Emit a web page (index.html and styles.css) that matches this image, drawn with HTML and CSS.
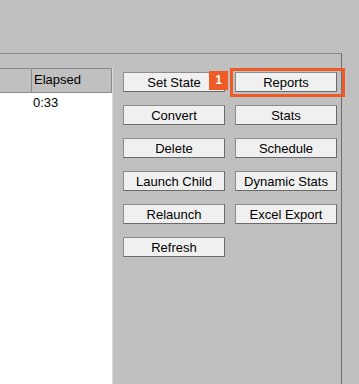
FILE: index.html
```html
<!DOCTYPE html>
<html lang="en">
<head>
  <meta charset="UTF-8" />
  <title>Job Actions</title>
  <link rel="stylesheet" href="styles.css">
</head>
<body>

  <div class="panel">
    <!-- job list -->
    <div class="grid">
      <div class="grid-head">
        <div class="cell first"></div>
        <div class="cell">Elapsed</div>
      </div>
      <div class="grid-body">
        <div class="row">
          <div class="cell first"></div>
          <div class="cell">0:33</div>
        </div>
      </div>
    </div>

    <!-- action buttons -->
    <div class="actions">
      <button class="btn">Set State</button>
      <div class="spot">
        <span class="badge">1</span>
        <button class="btn">Reports</button>
        <span class="ring"></span>
      </div>
      <button class="btn">Convert</button>
      <button class="btn">Stats</button>
      <button class="btn">Delete</button>
      <button class="btn">Schedule</button>
      <button class="btn">Launch Child</button>
      <button class="btn">Dynamic Stats</button>
      <button class="btn">Relaunch</button>
      <button class="btn">Excel Export</button>
      <button class="btn">Refresh</button>
    </div>
  </div>

</body>
</html>
```
FILE: styles.css
```css
* {
  box-sizing: border-box;
}

html, body {
  height: 100%;
}

body {
  margin: 0;
  padding-top: 53px;
  background: #c0c0c0;
  font-family: "Liberation Sans", Arial, sans-serif;
  font-size: 13px;
  color: #000;
  overflow: hidden;
}

.panel {
  display: flex;
  width: 342px;
  height: 100%;
  border-top: 1px solid #8a8a8a;
  border-right: 1px solid #6e6e6e;
}

.grid {
  display: flex;
  flex-direction: column;
  width: 113px;
  margin-top: 14px;
  border-right: 1px solid #dcdcdc;
}

.grid-head {
  display: flex;
  height: 25px;
  border-top: 1px solid #8a8a8a;
  border-bottom: 1px solid #8a8a8a;
  border-right: 1px solid #8a8a8a;
}

.grid-head .cell {
  padding: 3px 0 0 2px;
}

.cell {
  flex: 1;
}

.cell.first {
  flex: 0 0 32px;
  border-right: 1px solid #8a8a8a;
}

.grid-body {
  flex: 1;
  background: #fff;
}

.grid-body .row {
  display: flex;
  height: 18px;
}

.grid-body .cell {
  padding: 2px 0 0 1px;
}

.grid-body .cell.first {
  border-right: none;
}

.actions {
  display: grid;
  grid-template-columns: 102px 102px;
  grid-auto-rows: 20px;
  column-gap: 10px;
  row-gap: 13px;
  margin: 18px 0 0 10px;
  align-content: start;
}

.btn {
  width: 100%;
  height: 20px;
  padding: 0;
  font-family: inherit;
  font-size: 13px;
  color: #000;
  background: #f0f0f0;
  border: 1px solid #8c8c8c;
  border-right-color: #6a6a6a;
  border-bottom-color: #6a6a6a;
  border-radius: 1px;
}

.spot {
  position: relative;
}

.ring {
  position: absolute;
  left: -5px;
  top: -4px;
  width: 115px;
  height: 29px;
  border: 3px solid #f05a24;
}

.badge {
  position: absolute;
  left: -26px;
  top: -1px;
  width: 19px;
  height: 19px;
  background: #f05a24;
  color: #fff;
  font-weight: bold;
  font-size: 12px;
  line-height: 19px;
  text-align: center;
}
```
